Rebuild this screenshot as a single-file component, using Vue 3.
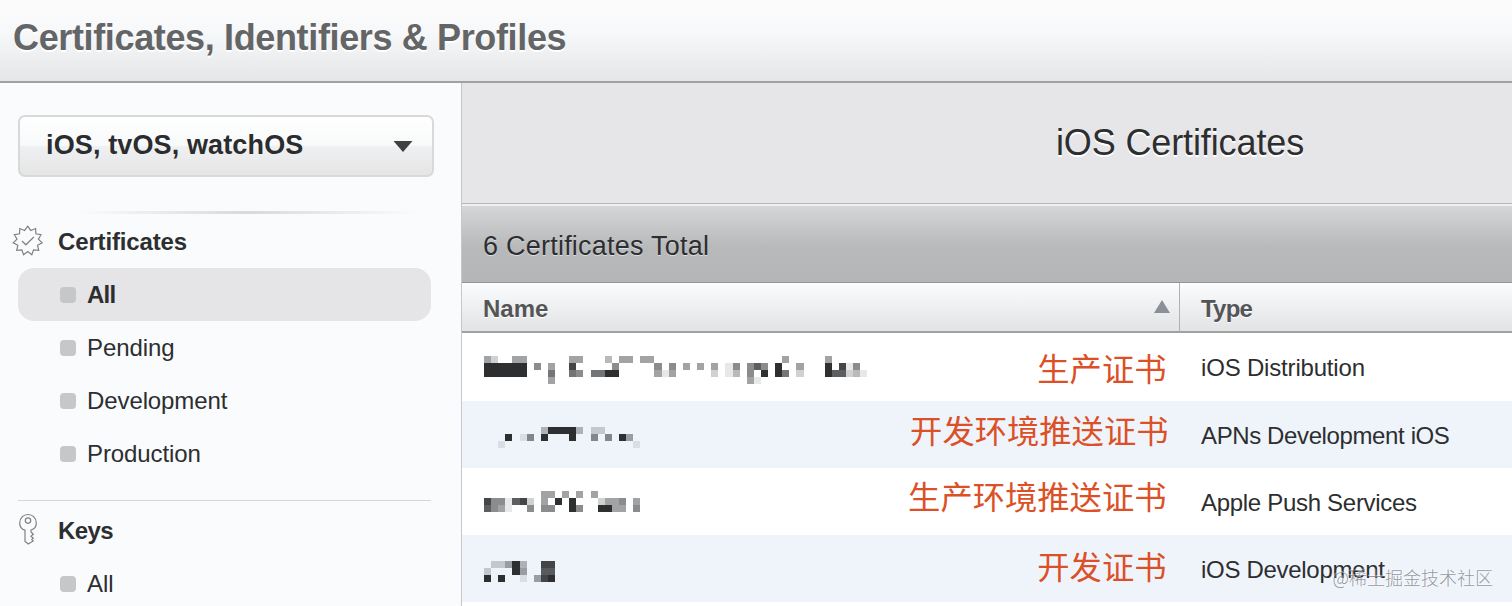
<template>
  <div class="portal">
    <header class="page-header">
      <h1>Certificates, Identifiers &amp; Profiles</h1>
    </header>

    <div class="body">
      <aside class="sidebar">
        <button class="platform">
          <span>iOS, tvOS, watchOS</span>
          <svg width="20" height="12" viewBox="0 0 20 12"><path d="M0.5 0H19.5L10 11Z" fill="#3f4042" /></svg>
        </button>
        <div class="fade-line"></div>

        <h2 class="group certificates">
          <svg width="32" height="32" viewBox="0 0 32 32">
            <path :d="badgePath" />
            <path d="M10 16L13.9 19.8L21.8 12" />
          </svg>
          <span>Certificates</span>
        </h2>
        <ul>
          <li v-for="item in certificateLinks" :key="item" :class="{ active: item === 'All' }">
            <i></i><span>{{ item }}</span>
          </li>
        </ul>

        <h2 class="group keys">
          <svg width="32" height="32" viewBox="0 0 32 32">
            <path d="M13 17.2C9.6 16.2 7.7 13.2 7.7 9.9C7.7 5.2 11.4 1.5 16 1.5S24.3 5.2 24.3 9.9C24.3 13 22.2 16 19 17V19L21.3 21.2L19 23.2L21.3 25.2L19.8 26.6L21.2 28L16.2 31L13 28.3Z" />
            <circle cx="16" cy="7.6" r="2.7" />
          </svg>
          <span>Keys</span>
        </h2>
        <ul>
          <li><i></i><span>All</span></li>
        </ul>
      </aside>

      <main>
        <div class="title"><h2>iOS Certificates</h2></div>
        <div class="total"><span>6 Certificates Total</span></div>
        <div class="row head">
          <div class="name">
            <span>Name</span>
            <svg width="16" height="13" viewBox="0 0 16 13"><path d="M8 0L16 13H0Z" fill="#8b8f98" /></svg>
          </div>
          <div class="type"><span>Type</span></div>
        </div>
        <div v-for="(row, i) in rows" :key="row.type" class="row" :class="'row-' + (i + 1)">
          <div class="name">
            <svg class="mosaic" width="390" height="29" shape-rendering="crispEdges">
              <rect
                v-for="cell in cells(row.mosaic)"
                :key="cell.x + '-' + cell.y"
                :x="cell.x"
                :y="cell.y"
                width="7.1"
                height="7.1"
                fill="#222426"
                :fill-opacity="cell.shade"
              />
            </svg>
            <span class="note">{{ row.note }}</span>
          </div>
          <div class="type"><span>{{ row.type }}</span></div>
        </div>
      </main>
    </div>
    <div class="watermark">@稀土掘金技术社区</div>
  </div>
</template>

<script setup>
const certificateLinks = ['All', 'Pending', 'Development', 'Production'];

// Each digit is the darkness of one square of the masked name
const rows = [
  {
    type: 'iOS Distribution',
    note: '生产证书',
    mosaic: [
      '42..44......44...3.44.44..................4.....4',
      '999999.5.4..8.....5.....5.5.4.4.4.15.575.9..4...9.815.',
      '999999...6..65.6699.....414.....2.13.5.9.96.2...977231',
      '.........4...........................41',
    ],
  },
  {
    type: 'APNs Development iOS',
    note: '开发环境推送证书',
    mosaic: [
      '........399993.22',
      '...9.15.9...9..5.5.94',
      '..1..................1',
    ],
  },
  {
    type: 'Apple Push Services',
    note: '生产环境推送证书',
    mosaic: [
      '........44.4.4.4',
      '8551782.4.9.9...2445.4',
      '7541..5.55..95..9944.5',
    ],
  },
  {
    type: 'iOS Development',
    note: '开发证书',
    mosaic: [
      '.22493..88',
      '2...94..77',
      '9.9..1.489',
    ],
  },
];

function cells(lines) {
  return lines.flatMap((line, y) =>
    [...line]
      .map((c, x) => ({ x: +(x * 7.1).toFixed(1), y: +(y * 7.1).toFixed(1), shade: c / 9.5 }))
      .filter((cell) => cell.shade)
  );
}

// Eleven-pointed seal
const badgePath =
  'M' +
  Array.from({ length: 22 }, (_, i) => {
    const r = i % 2 ? 10.8 : 14.6;
    const a = (i * Math.PI) / 11 - Math.PI / 2;
    return `${(15.7 + r * Math.cos(a)).toFixed(2)} ${(15.8 + r * Math.sin(a)).toFixed(2)}`;
  }).join('L') +
  'Z';
</script>

<style>
body {
  margin: 0;
  overflow: hidden;
}
</style>

<style scoped>
.portal {
  position: relative;
  width: 1512px;
  height: 606px;
  overflow: hidden;
  background: #fff;
  color: #2d2e30;
  font-family: "Liberation Sans", "Noto Sans CJK SC", sans-serif;
  font-size: 24px;
  white-space: nowrap;
}

h1,
h2,
ul {
  margin: 0;
  padding: 0;
  list-style: none;
}

.page-header {
  box-sizing: border-box;
  height: 83px;
  padding: 17px 13px 0;
  border-bottom: 2px solid #a0a1a3;
  background: linear-gradient(#fcfcfd, #f7f8f9 40%, #e5e6e7);
}

.page-header h1 {
  font-size: 36px;
  line-height: 42px;
  letter-spacing: -0.36px;
  color: #646567;
  text-shadow: 0 2px 0 #fff;
}

.body {
  display: flex;
  height: 523px;
}

.sidebar {
  box-sizing: border-box;
  flex: none;
  width: 462px;
  padding: 32px 30px 0 18px;
  border-right: 1px solid #c5c7c9;
  background: #fafbfd;
}

.platform {
  box-sizing: border-box;
  display: flex;
  align-items: center;
  justify-content: space-between;
  width: 416px;
  height: 62px;
  padding: 0 19px 2px 26px;
  border: 2px solid #d8d9db;
  border-radius: 7px;
  background: linear-gradient(#fff, #f8f9fa 49%, #eff0f1 51%, #e5e5e6);
  color: #2b2c2e;
  font-family: inherit;
  font-size: 27px;
  font-weight: bold;
  letter-spacing: 0.13px;
}

.platform svg {
  margin-top: 3px;
}

.fade-line {
  width: 340px;
  height: 3px;
  margin: 34px 0 0 60px;
  background: linear-gradient(90deg, transparent, #d8d9db 50%, transparent);
}

.group {
  display: flex;
  align-items: center;
  gap: 14px;
  font-size: 24px;
  letter-spacing: -0.15px;
}

.group svg {
  margin-left: -6px;
  fill: none;
  stroke: #808183;
  stroke-width: 1.2;
}

.certificates {
  height: 54px;
}

.certificates span {
  padding-top: 1px;
}

.keys {
  box-sizing: border-box;
  width: 413px;
  height: 58px;
  margin-top: 19px;
  border-top: 1px solid #d5d6d8;
  letter-spacing: -0.6px;
}

.keys svg {
  margin-top: -1px;
}

.keys span {
  padding-top: 4px;
}

li {
  display: flex;
  align-items: center;
  width: 371px;
  height: 53.2px;
  padding-left: 42px;
  border-radius: 16px;
  letter-spacing: -0.1px;
}

li.active {
  background: #e5e5e7;
  font-weight: bold;
  letter-spacing: -0.8px;
}

li i {
  width: 16px;
  height: 16px;
  margin-right: 11px;
  border-radius: 4px;
  background: #c6c7c8;
}

main {
  flex: 1;
}

.title {
  display: flex;
  justify-content: center;
  align-items: center;
  width: 1436px;
  height: 120px;
  background: #e6e6e8;
}

.title h2 {
  font-size: 36px;
  font-weight: normal;
  letter-spacing: -0.12px;
  text-shadow: 0 2px 0 #fff;
}

.total {
  box-sizing: border-box;
  display: flex;
  align-items: center;
  height: 80px;
  padding: 6px 0 0 21px;
  border-top: 1px solid #b5b8b9;
  border-bottom: 1px solid #949597;
  background: linear-gradient(#eff1f1 2px, #d4d6d7 2px, #b8b9bb 55%, #b5b6b8);
  font-size: 27px;
  letter-spacing: 0.23px;
  text-shadow: 0 1px 0 #dcdddd;
}

.row {
  display: flex;
  height: 67px;
}

.row-1 {
  height: 68px;
}

.row .name {
  box-sizing: border-box;
  display: flex;
  justify-content: space-between;
  width: 718px;
  padding: 0 13.5px 0 22px;
}

.row .type {
  display: flex;
  align-items: center;
  flex: 1;
  padding: 2px 0 0 21px;
  letter-spacing: -0.3px;
}

.row-1 .type {
  padding-top: 1px;
  letter-spacing: -0.18px;
}

.row-2 .type {
  letter-spacing: -0.38px;
}

.row-2,
.row-4 {
  background: #eff4fb;
}

.head {
  box-sizing: border-box;
  height: 50px;
  border-bottom: 2px solid #a0a1a3;
  background: linear-gradient(#fbfcfd, #e2e3e4);
  color: #545557;
  font-weight: bold;
  text-shadow: 0 1px 0 #fff;
}

.head .name {
  align-items: center;
  padding: 3px 9px 0 21px;
  border-right: 1px solid #b0b1b3;
}

.head .name svg {
  margin-top: -5px;
}

.head .type {
  padding-top: 3px;
  letter-spacing: -0.8px;
}

.mosaic {
  flex: none;
  margin-top: 23px;
}

.row-2 .mosaic,
.row-4 .mosaic {
  margin-top: 26px;
}

.note {
  font-family: "Noto Sans CJK SC", sans-serif;
  font-size: 32.3px;
  line-height: 40px;
  color: #dc5027;
  margin-top: 14px;
}

.row-2 .note {
  margin-top: 8px;
  margin-right: -2px;
}

.row-3 .note {
  margin-top: 7px;
}

.row-4 .note {
  margin-top: 10px;
}

.watermark {
  position: absolute;
  right: 19px;
  bottom: 17px;
  font-family: "Noto Sans CJK SC", sans-serif;
  font-size: 18px;
  font-weight: 300;
  line-height: 24px;
  color: rgba(125, 128, 132, 0.8);
  text-shadow: -1px -1px 0 rgba(255, 255, 255, 0.5);
}
</style>
